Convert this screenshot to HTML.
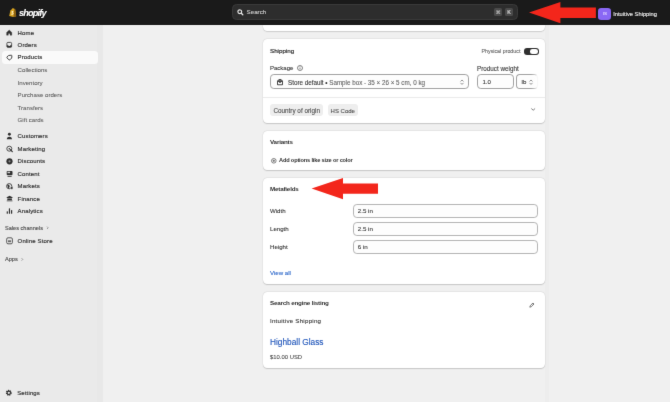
<!DOCTYPE html>
<html><head><meta charset="utf-8">
<style>
html,body{margin:0;padding:0}
body{width:670px;height:402px;position:relative;overflow:hidden;background:#f0f0f0;font-family:"Liberation Sans",sans-serif;color:#303030}
.a{position:absolute}
.t{position:absolute;white-space:nowrap;line-height:10px;height:10px;font-size:6.1px;color:#303030;-webkit-text-stroke-width:0.08px}
.nav{font-weight:normal;font-size:6px;left:17.6px;color:#303030;-webkit-text-stroke:0.16px #303030;letter-spacing:0.14px}
.sub{font-size:6.1px;left:17.6px;color:#5a5a5a;font-weight:normal;-webkit-text-stroke:0.06px #5a5a5a}
.card{position:absolute;left:263.3px;width:281.9px;background:#fff;border-radius:4.2px;box-shadow:0 0.7px 1.2px rgba(0,0,0,0.16),0 0 0 0.4px rgba(0,0,0,0.05)}
.h{font-weight:bold;font-size:6.25px;left:270px;letter-spacing:-0.2px;-webkit-text-stroke-width:0}
.inp{position:absolute;box-sizing:border-box;border:0.6px solid #a2a2a2;border-radius:3.8px;background:#fdfdfd}
.tag{position:absolute;background:#eeeeee;border-radius:3px;height:12px}
svg{position:absolute;overflow:visible}
#wrap{position:absolute;left:0;top:0;width:670px;height:402px;overflow:hidden;background:#f0f0f0;filter:url(#soft);will-change:transform}
</style></head><body><svg width="0" height="0" style="position:absolute"><filter id="soft" x="0" y="0" width="100%" height="100%" color-interpolation-filters="sRGB"><feConvolveMatrix order="3" kernelMatrix="0.01 0.09 0.01 0.09 1 0.09 0.01 0.09 0.01" edgeMode="duplicate" preserveAlpha="true"/></filter></svg><div id="wrap">
<!-- header -->
<div class="a" id="hdr" style="left:0;top:0;width:670px;height:24.5px;background:#1a1a1a"></div>
<!-- sidebar -->
<div class="a" id="side" style="left:0;top:24.5px;width:102.6px;height:378px;background:#eaeaea"></div><div class="a" style="left:97px;top:24.5px;width:5.6px;height:378px;background:#e8e8e8"></div>
<div class="a" style="left:545.2px;top:24.5px;width:4px;height:378px;background:#ededed"></div>
<!-- logo -->
<svg style="left:8.6px;top:8px" width="7.6" height="9" viewBox="0 0 76 90"><path d="M14 22 L26 16 C30 6 40 0 47 6 L54 8 L62 14 L72 82 L44 90 L2 80 Z" fill="#d9a520"/><path d="M54 8 L62 14 L72 82 L44 90 Z" fill="#8a5e10"/><path d="M42 30 C30 26 22 34 26 42 C29 48 38 50 37 56 C36 60 28 58 24 55 L22 64 C32 70 46 68 46 56 C46 46 34 46 35 40 C36 36 42 38 44 39 Z" fill="#fff6d8"/></svg>
<div class="t" id="t_shopify" style="left:19px;top:8px;font-size:9.2px;font-weight:bold;font-style:italic;color:#fff;letter-spacing:-0.85px">shopify</div>
<!-- search -->
<div class="a" id="search" style="left:232px;top:3.8px;width:286.4px;height:16.4px;box-sizing:border-box;background:#2d2d2d;border:0.6px solid #393939;border-radius:4.5px"></div>
<svg style="left:237.3px;top:8.8px" width="6.6" height="6.6" viewBox="0 0 66 66"><circle cx="28" cy="28" r="19" fill="none" stroke="#e8e8e8" stroke-width="12"/><path d="M43 43 L58 58" stroke="#e8e8e8" stroke-width="13" stroke-linecap="round"/></svg>
<div class="t" id="t_search" style="left:246.6px;top:7px;font-size:6.2px;color:#cdcdcd;-webkit-text-stroke:0.12px #cdcdcd">Search</div>
<div class="a" style="left:494.4px;top:8px;width:7.8px;height:8px;background:#4a4a4a;border-radius:1.5px"></div>
<div class="a" style="left:505.2px;top:8px;width:7.8px;height:8px;background:#4a4a4a;border-radius:1.5px"></div>
<div class="t" style="left:494.4px;top:7px;width:7.8px;text-align:center;font-size:5px;color:#d0d0d0;font-family:'DejaVu Sans',sans-serif">⌘</div>
<div class="t" style="left:505.2px;top:7px;width:7.8px;text-align:center;font-size:5px;color:#d0d0d0;font-weight:bold">K</div>
<!-- avatar -->
<div class="a" style="left:598.3px;top:7.7px;width:13.1px;height:12.6px;background:#8a68f5;border-radius:3.2px"></div>
<div class="t" style="left:598.3px;top:9.3px;width:13.1px;text-align:center;font-size:4.4px;color:#e6dcff">IS</div>
<div class="t" id="t_store" style="left:613.2px;top:9px;font-size:5.75px;color:#e8e8e8;-webkit-text-stroke:0.15px #e8e8e8">Intuitive Shipping</div>
<!-- sidebar nav -->
<div class="a" style="left:1.8px;top:51.3px;width:96.4px;height:12.6px;background:#fafafa;border-radius:3.5px"></div>
<div class="t nav" id="t_home" style="top:27.6px">Home</div>
<div class="t nav" style="top:40.1px">Orders</div>
<div class="t nav" id="t_products" style="top:52.4px">Products</div>
<div class="t sub" style="top:65.1px">Collections</div>
<div class="t sub" style="top:77.6px">Inventory</div>
<div class="t sub" id="t_po" style="top:90.2px">Purchase orders</div>
<div class="t sub" style="top:102.6px">Transfers</div>
<div class="t sub" style="top:115px">Gift cards</div>
<div class="t nav" id="t_cust" style="top:131.2px">Customers</div>
<div class="t nav" style="top:143.8px">Marketing</div>
<div class="t nav" style="top:156.2px">Discounts</div>
<div class="t nav" style="top:168.6px">Content</div>
<div class="t nav" style="top:181.2px">Markets</div>
<div class="t nav" style="top:193.8px">Finance</div>
<div class="t nav" style="top:206.2px">Analytics</div>
<div class="t" id="t_sales" style="left:5px;top:222.8px;font-size:5.6px;color:#4a4a4a;-webkit-text-stroke:0.12px #4a4a4a">Sales channels</div>
<div class="t nav" style="top:235.6px">Online Store</div>
<div class="t" id="t_apps" style="left:5px;top:254.4px;font-size:5.6px;color:#4a4a4a;-webkit-text-stroke:0.12px #4a4a4a">Apps</div>
<div class="t nav" id="t_settings" style="left:17.2px;top:387.8px">Settings</div>
<!-- sidebar icons -->
<svg style="left:0;top:0" width="110" height="402" viewBox="0 0 110 402" fill="#303030" stroke="none">
<!-- home -->
<path d="M9.200 30 L11.800 32.400 L11.800 35.200 L10.100 35.200 L10.100 33.500 L8.300 33.500 L8.300 35.200 L6.600 35.200 L6.600 32.400 Z" stroke="#303030" stroke-width="0.300" stroke-linejoin="round"/>
<!-- orders -->
<rect x="6.900" y="42.400" width="4.700" height="4.900" rx="1" fill="none" stroke="#303030" stroke-width="0.800"/><path d="M6.900 45.200 h1.300 l0.500 0.700 h1.100 l0.500 -0.700 h1.300 v1.500 a0.600 0.600 0 0 1 -0.600 0.600 h-3.500 a0.600 0.600 0 0 1 -0.600 -0.600 Z"/>
<!-- products tag -->
<path d="M8.600 55.500 L11.200 55.200 Q11.900 55.200 11.900 55.900 L11.700 58 L9.900 59.800 Q9.400 60.100 8.900 59.700 L7 57.900 Q6.600 57.400 7 56.900 Z" fill="none" stroke="#303030" stroke-width="0.900" stroke-linejoin="round"/>
<!-- customers -->
<circle cx="9.400" cy="134.300" r="1.450"/><path d="M6.800 139.300 c0 -3.300 5.200 -3.300 5.200 0 Z"/>
<!-- marketing -->
<circle cx="9.300" cy="148.700" r="2.500" fill="none" stroke="#303030" stroke-width="0.850"/><circle cx="9.300" cy="148.700" r="0.800"/><path d="M10.300 149.700 L12.300 151.700" stroke="#303030" stroke-width="1.200" stroke-linecap="round"/>
<!-- discounts -->
<circle cx="9.500" cy="161.300" r="3.100"/><circle cx="9.500" cy="161.300" r="1.100" fill="#8a8a8a"/>
<!-- content -->
<rect x="6.700" y="170.900" width="5.800" height="4.300" rx="0.900"/><rect x="7.500" y="171.700" width="2.600" height="1.500" fill="#d0d0d0"/><rect x="7.400" y="176" width="4.400" height="0.800" rx="0.400"/>
<!-- markets -->
<circle cx="9.200" cy="186.200" r="2.600" fill="none" stroke="#303030" stroke-width="0.850"/><path d="M7.200 184.500 l2.100 0.500 l0.400 2.100 l-1.500 1.500 Z"/><rect x="10.600" y="186.600" width="2.300" height="2.700" rx="0.800" stroke="#ebebeb" stroke-width="0.500"/>
<!-- finance -->
<path d="M9.600 195.700 L12.500 197.300 L12.500 198 L6.700 198 L6.700 197.300 Z"/><rect x="7.300" y="198.400" width="4.600" height="1.700"/><rect x="6.700" y="200.400" width="5.800" height="0.900" rx="0.300"/>
<!-- analytics -->
<rect x="6.700" y="211.200" width="1.200" height="2.600" rx="0.500"/><rect x="8.850" y="208.300" width="1.200" height="5.500" rx="0.500"/><rect x="11" y="210" width="1.200" height="3.800" rx="0.500"/>
<!-- online store -->
<rect x="6.700" y="237.800" width="5.700" height="6" rx="1.300" fill="none" stroke="#4a4a4a" stroke-width="0.900"/><path d="M8 240.300 h3.100 v1.900 h-3.100 Z" fill="#6a6a6a"/>
<!-- chevrons -->
<path d="M47 226.600 l1.200 1.200 l-1.200 1.200" fill="none" stroke="#616161" stroke-width="0.600"/>
<path d="M21.600 258.200 l1.200 1.200 l-1.200 1.200" fill="none" stroke="#616161" stroke-width="0.600"/>
<!-- settings gear -->
<circle cx="8.800" cy="392.800" r="2.300" fill="none" stroke="#303030" stroke-width="1.300" stroke-dasharray="1.100 0.700"/><circle cx="8.800" cy="392.800" r="1.700" fill="none" stroke="#303030" stroke-width="1.100"/>
</svg>
<!-- cards -->
<div class="card" style="top:24.5px;height:6.9px;border-radius:0 0 4.2px 4.2px"></div>
<div class="card" id="c_ship" style="top:39.200px;height:84.200px"></div>
<div class="card" id="c_var" style="top:131.400px;height:38.200px"></div>
<div class="card" id="c_meta" style="top:177.600px;height:106.400px"></div>
<div class="card" id="c_seo" style="top:292px;height:76px"></div>

<!-- shipping -->
<div class="t h" id="t_shipping" style="top:46.400px;font-weight:normal;font-size:6.2px;letter-spacing:0;-webkit-text-stroke:0.2px #303030">Shipping</div>
<div class="t" id="t_phys" style="left:481.500px;top:46.200px;font-size:5.300px;color:#616161">Physical product</div>
<div class="a" style="left:524px;top:47.600px;width:14.500px;height:7.400px;background:#303030;border-radius:3px"></div>
<div class="a" style="left:530px;top:48.500px;width:7.600px;height:5.600px;background:#fff;border-radius:2.300px"></div>
<div class="t" id="t_package" style="left:270px;top:63.200px;font-size:6px">Package</div>
<svg style="left:296.600px;top:65.400px" width="6" height="6" viewBox="0 0 60 60"><circle cx="30" cy="30" r="25" fill="none" stroke="#505050" stroke-width="7"/><rect x="26.5" y="26" width="7" height="18" fill="#505050"/><rect x="26.5" y="14" width="7" height="7" fill="#505050"/></svg>
<div class="t" id="t_pw" style="left:477px;top:63.600px;font-size:6.300px">Product weight</div>
<div class="inp" style="left:270px;top:74.200px;width:199.400px;height:14.700px"></div>
<svg style="left:276.800px;top:79.200px" width="6" height="6.200" viewBox="0 0 60 62" fill="#4a4a4a"><path d="M14 12 v-4 a8 8 0 0 1 8 -8 h16 a8 8 0 0 1 8 8 v4 h6 a8 8 0 0 1 8 8 v34 a8 8 0 0 1 -8 8 h-44 a8 8 0 0 1 -8 -8 v-34 a8 8 0 0 1 8 -8 Z M23 12 h14 v-3 h-14 Z M10 30 v22 h40 v-22 h-12 v10 h-16 v-10 Z" fill-rule="evenodd"/></svg>
<div class="t" id="t_pkgsel" style="left:288px;top:77.6px;font-size:6.27px"><span style="color:#303030">Store default •</span> <span style="color:#616161">Sample box - 35 × 26 × 5 cm, 0 kg</span></div>
<svg style="left:460px;top:79px" width="4" height="6.400" viewBox="0 0 40 64" fill="none" stroke="#616161" stroke-width="7" stroke-linecap="round" stroke-linejoin="round"><path d="M8 22 L20 10 L32 22"/><path d="M8 42 L20 54 L32 42"/></svg>
<div class="inp" style="left:477px;top:74.200px;width:37.400px;height:14.700px"></div>
<div class="t" style="left:482.400px;top:77px;font-size:6.100px">1.0</div>
<div class="inp" style="left:516.200px;top:74.200px;width:22.200px;height:14.700px;border-right-color:#e6e6e6"></div><div class="a" style="left:531px;top:73.500px;width:8px;height:16px;background:linear-gradient(to right,rgba(255,255,255,0),rgba(255,255,255,0.9))"></div>
<div class="t" style="left:521.600px;top:77px;font-size:6.100px">lb</div>
<svg style="left:529px;top:79px" width="4" height="6.400" viewBox="0 0 40 64" fill="none" stroke="#616161" stroke-width="7" stroke-linecap="round" stroke-linejoin="round"><path d="M8 22 L20 10 L32 22"/><path d="M8 42 L20 54 L32 42"/></svg>
<div class="a" style="left:263.300px;top:96.600px;width:281.900px;height:0.600px;background:#ebebeb"></div>
<div class="tag" style="left:270.400px;top:104.400px;width:52.600px"></div>
<div class="t" id="t_coo" style="left:273.400px;top:105.800px;font-size:6.35px;color:#4a4a4a">Country of origin</div>
<div class="tag" style="left:328px;top:104.400px;width:30px"></div>
<div class="t" id="t_hs" style="left:330.600px;top:105.800px;font-size:6px;color:#4a4a4a">HS Code</div>
<svg style="left:531.400px;top:108px" width="4.400" height="3" viewBox="0 0 44 30" fill="none" stroke="#4a4a4a" stroke-width="7" stroke-linecap="round" stroke-linejoin="round"><path d="M6 8 L22 22 L38 8"/></svg>

<!-- variants -->
<div class="t h" id="t_variants" style="top:137.400px">Variants</div>
<svg style="left:270.700px;top:157.500px" width="5.600" height="5.600" viewBox="0 0 56 56"><circle cx="28" cy="28" r="23" fill="none" stroke="#303030" stroke-width="6"/><path d="M28 16 V40 M16 28 H40" stroke="#303030" stroke-width="6"/></svg>
<div class="t" id="t_addopt" style="left:279px;top:155.400px;font-size:5.65px;font-weight:bold;letter-spacing:-0.17px;-webkit-text-stroke-width:0;color:#303030">Add options like size or color</div>

<!-- metafields -->
<div class="t h" id="t_meta" style="top:184px">Metafields</div>
<div class="t" id="t_width" style="left:270px;top:206px">Width</div>
<div class="t" style="left:270px;top:224px">Length</div>
<div class="t" style="left:270px;top:242px">Height</div>
<div class="inp" style="left:353.100px;top:203.9px;width:185.400px;height:14.400px;border-color:#b4b4b4;border-width:0.700px"></div>
<div class="inp" style="left:353.100px;top:221.9px;width:185.400px;height:14.400px;border-color:#b4b4b4;border-width:0.700px"></div>
<div class="inp" style="left:353.100px;top:239.9px;width:185.400px;height:14.400px;border-color:#b4b4b4;border-width:0.700px"></div>
<div class="t" style="left:357.800px;top:206.4px;font-size:6.2px">2.5 in</div>
<div class="t" style="left:357.800px;top:224.4px;font-size:6.2px">2.5 in</div>
<div class="t" style="left:357.800px;top:242.4px;font-size:6.2px">6 in</div>
<div class="t" id="t_viewall" style="left:270px;top:268px;color:#1d5cc6;font-size:6.1px">View all</div>

<!-- seo -->
<div class="t h" id="t_seo" style="top:298.300px">Search engine listing</div>
<svg style="left:528.600px;top:302px" width="6" height="6" viewBox="0 0 60 60" fill="none" stroke="#4a4a4a" stroke-width="7" stroke-linejoin="round"><path d="M8 52 L12 38 L40 10 L50 20 L22 48 Z"/><path d="M34 16 L44 26"/></svg>
<div class="t" id="t_is2" style="left:270px;top:316px;font-size:6.2px;letter-spacing:0.23px">Intuitive Shipping</div>
<div class="t" id="t_hb" style="left:270px;top:336.600px;font-size:8.3px;color:#1f55ba;-webkit-text-stroke:0.12px #1f55ba">Highball Glass</div>
<div class="t" id="t_price" style="left:270px;top:352px;font-size:5.9px;color:#4a4a4a">$10.00 USD</div>
<!-- header arrow -->
<svg style="left:0;top:0" width="670" height="402" viewBox="0 0 670 402"><path d="M529 12.6 L560.4 2 L560.4 7.5 L595.9 7.5 L595.9 18 L560.4 18 L560.4 23.2 Z" fill="#f3261b"/><path d="M311.6 188.6 L343 178 L343 183.6 L378 183.6 L378 193.7 L343 193.7 L343 199.3 Z" fill="#f3261b"/></svg>
</div></body></html>
